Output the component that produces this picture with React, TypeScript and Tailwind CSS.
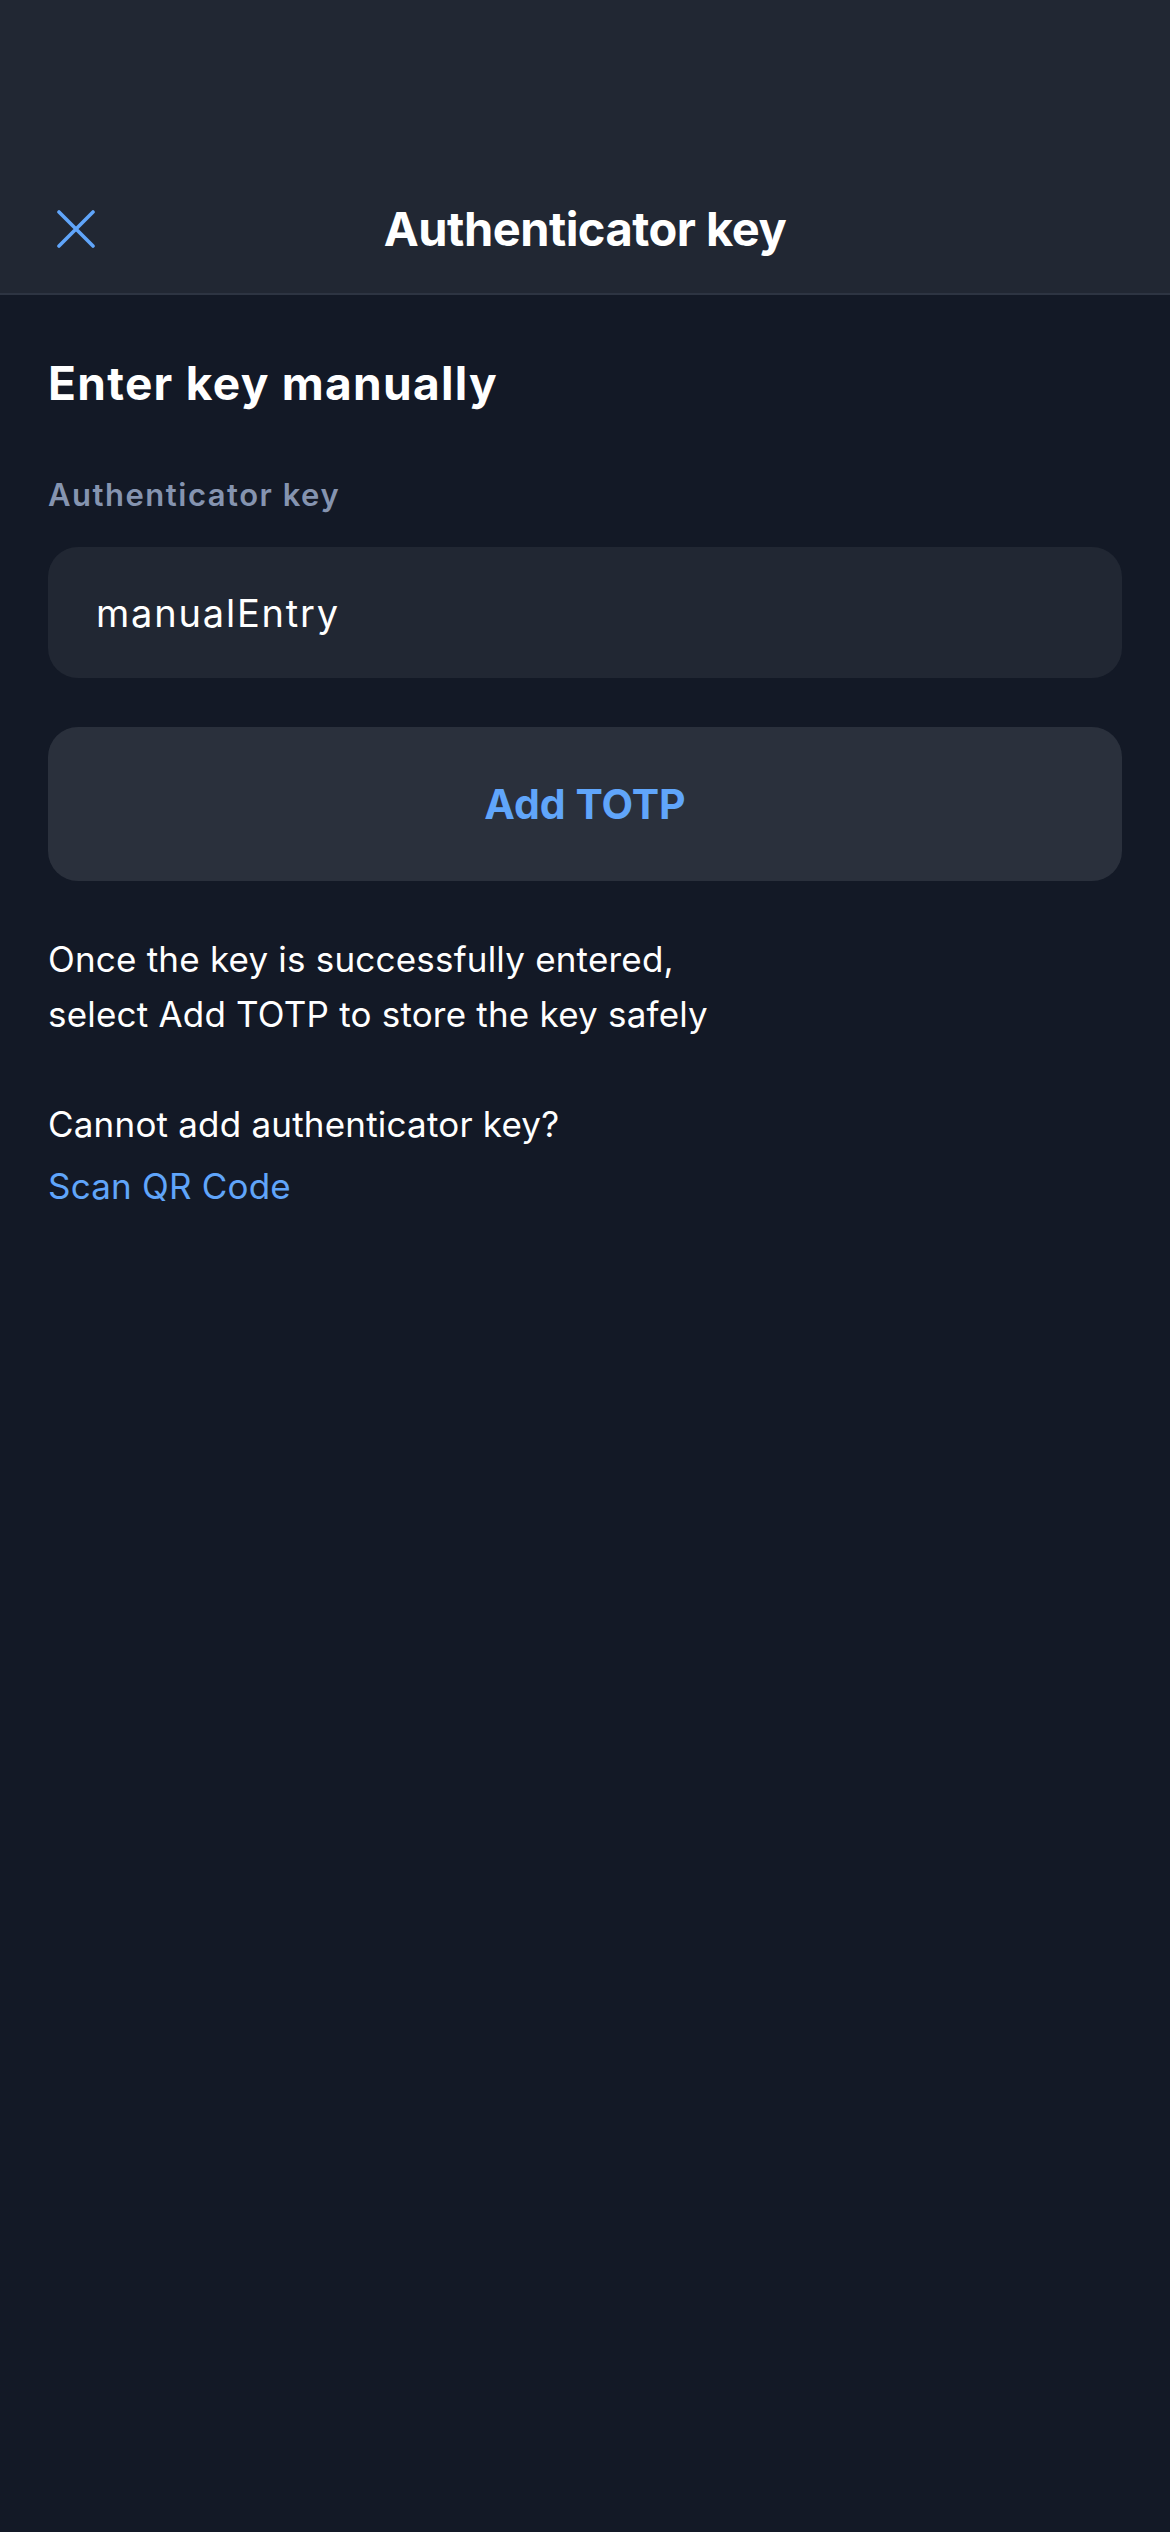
import React from "react";

export default function App() {
  return (
    <div className="min-h-[2532px] w-full bg-[#131926] text-white" style={{ fontFamily: "Inter, 'Noto Sans', sans-serif" }}>
      <header className="h-[295px] bg-[#212733] border-b-2 border-[#2d3442] flex flex-col justify-end">
        <div className="relative h-[128px] flex items-center justify-center">
          <button className="absolute left-[57px] top-[45px] w-[38px] h-[38px]" aria-label="Close">
            <svg viewBox="0 0 38 38" className="w-[38px] h-[38px]" fill="none" stroke="#60a5fa" strokeWidth="3.6" strokeLinecap="round">
              <path d="M2 2 L36 36 M36 2 L2 36" />
            </svg>
          </button>
          <h1 className="text-[47px] font-bold leading-[56px] tracking-[-0.5px]">Authenticator key</h1>
        </div>
      </header>
      <main className="px-12">
        <h2 className="mt-[62px] text-[46px] font-bold leading-[52px] tracking-[1.3px]">Enter key manually</h2>
        <div className="mt-[68px] text-[31px] font-semibold leading-[36px] tracking-[1.5px] text-[#8594b0]">Authenticator key</div>
        <div className="mt-[34px] h-[131px] rounded-[30px] bg-[#212733] flex items-center px-12">
          <span className="text-[38px] leading-[40px] tracking-[1.8px] text-white">manualEntry</span>
        </div>
        <button className="mt-[49px] w-full h-[154px] rounded-[30px] bg-[#2a303c] flex items-center justify-center">
          <span className="text-[41px] font-bold leading-[48px] text-[#60a5fa]">Add TOTP</span>
        </button>
        <div className="mt-[51px] text-[35px] leading-[55px] tracking-[0.2px]">
          <p>
            Once the key is successfully entered,
            <br />
            select Add TOTP to store the key safely
          </p>
          <p className="mt-[55px]">Cannot add authenticator key?</p>
          <p className="mt-[7px] text-[#60a5fa]">Scan QR Code</p>
        </div>
      </main>
    </div>
  );
}
